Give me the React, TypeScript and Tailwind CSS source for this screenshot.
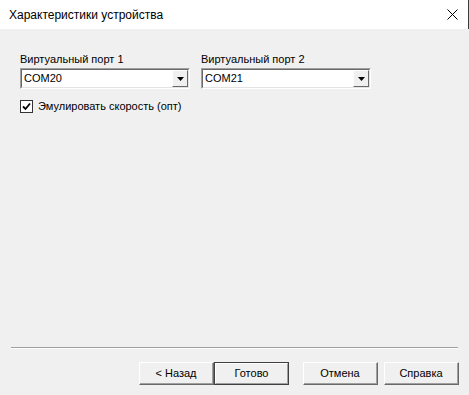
import React from 'react';

const font = { fontFamily: '"Liberation Sans", Arial, sans-serif' };

function Combo({ value }: { value: string }) {
  return (
    <div className="h-[21px] w-[170px] flex bg-white border-t border-l border-[#a0a0a0] border-r border-b border-r-white border-b-white">
      <div className="flex-1 flex border-t border-l border-[#696969] border-r border-b border-r-[#e3e3e3] border-b-[#e3e3e3]">
        <div className="flex-1 flex items-center pl-[2px] text-[11px] text-black leading-none">{value}</div>
        <div className="w-[16px] flex items-center justify-center bg-[#f0f0f0] border-t border-l border-white border-r border-b border-r-[#696969] border-b-[#696969]">
          <svg width="7" height="4" viewBox="0 0 7 4">
            <path d="M0 0H7L3.5 4Z" fill="#000" />
          </svg>
        </div>
      </div>
    </div>
  );
}

function Btn({ label, primary }: { label: string; primary?: boolean }) {
  return (
    <div
      className={
        'w-[75px] h-[23px] flex items-center justify-center text-[11px] text-black bg-[#f0f0f0] ' +
        (primary
          ? 'border border-[#404040]'
          : 'border-t border-l border-white border-r border-b border-r-[#696969] border-b-[#696969]')
      }
    >
      <div
        className={
          'w-full h-full flex items-center justify-center ' +
          (primary
            ? 'border-t border-l border-white border-r border-b border-r-[#a0a0a0] border-b-[#a0a0a0]'
            : 'border-r border-b border-[#a0a0a0]')
        }
      >
        {label}
      </div>
    </div>
  );
}

export default function App() {
  return (
    <div className="w-[469px] h-[395px] flex flex-col bg-[#f0f0f0]" style={font}>
      {/* title bar */}
      <div className="h-[29px] flex items-center justify-between bg-white pl-[9px] pr-[10px] border-r border-[#3c3c3c]">
        <span className="text-[12px] text-black">Характеристики устройства</span>
        <svg width="11" height="11" viewBox="0 0 11 11">
          <path d="M0.5 0.5L10.5 10.5M10.5 0.5L0.5 10.5" stroke="#000" strokeWidth="1" />
        </svg>
      </div>

      <div className="px-[20px] pt-[24px]">
        <div className="flex gap-[11px]">
          <div className="flex flex-col gap-[2px]">
            <span className="text-[11px] leading-[13px] text-black">Виртуальный порт 1</span>
            <Combo value="COM20" />
          </div>
          <div className="flex flex-col gap-[2px]">
            <span className="text-[11px] leading-[13px] text-black">Виртуальный порт 2</span>
            <Combo value="COM21" />
          </div>
        </div>

        <div className="flex items-center gap-[5px] mt-[11px]">
          <div className="w-[13px] h-[13px] bg-white border border-[#333] flex items-center justify-center">
            <svg width="9" height="9" viewBox="0 0 9 9">
              <path d="M1 4.5L3.5 7L8 1.5" stroke="#000" strokeWidth="1.8" fill="none" />
            </svg>
          </div>
          <span className="text-[11px] leading-[13px] text-black">Эмулировать скорость (опт)</span>
        </div>
      </div>

      <div className="flex-1" />

      <div className="mx-[11px] border-t border-[#a0a0a0] border-b border-b-white" />

      <div className="flex justify-end pr-[10px] mt-[13px] mb-[10px]">
        <Btn label="< Назад" />
        <Btn label="Готово" primary />
        <div className="w-[14px]" />
        <Btn label="Отмена" />
        <div className="w-[6px]" />
        <Btn label="Справка" />
      </div>
    </div>
  );
}
